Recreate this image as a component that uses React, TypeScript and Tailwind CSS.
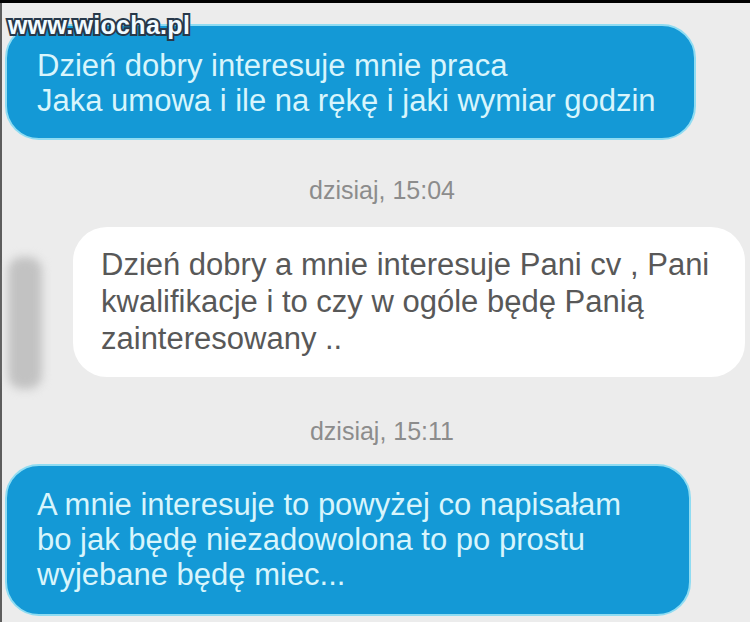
import React from "react";

const font = "font-['Liberation_Sans','Noto_Sans',Arial,sans-serif]";

function Stamp({ children }: { children: React.ReactNode }) {
  return (
    <div className={`${font} text-center text-[25px] leading-[26px] text-[#8c8c8c] pl-[12px]`}>
      {children}
    </div>
  );
}

function BlueBubble({ lines, className }: { lines: string[]; className: string }) {
  return (
    <div
      className={`${font} ml-[3px] rounded-[34px] border-2 border-[#8fdcf2] bg-[#1499d6] pl-[30px] text-[31px] leading-[35px] text-[#d8f5fc] ${className}`}
    >
      {lines.map((l) => (
        <div key={l} className="whitespace-nowrap">
          {l}
        </div>
      ))}
    </div>
  );
}

export default function App() {
  return (
    <div className="h-[622px] w-[750px] overflow-hidden bg-black pt-[3px]">
      <div className="relative flex h-full flex-col border-l-2 border-[#5d5d5d] bg-[#ececec]">
        {/* watermark */}
        <div className="absolute left-[6px] top-[7px] z-10 font-['Liberation_Sans',Arial,sans-serif] text-[25px] font-bold leading-[30px] tracking-[0.3px] text-[#f2fbff] [-webkit-text-stroke:4px_#27384a] [paint-order:stroke_fill]">
          www.wiocha.pl
        </div>

        <BlueBubble
          className="mt-[21px] w-[691px] pt-[22px] pb-[20px]"
          lines={["Dzień dobry interesuje mnie praca", "Jaka umowa i ile na rękę i jaki wymiar godzin"]}
        />

        <div className="mt-[37px]">
          <Stamp>dzisiaj, 15:04</Stamp>
        </div>

        <div className="mt-[24px] flex items-start">
          <div className="ml-[6px] mt-[30px] h-[132px] w-[34px] shrink-0 rounded-[14px] bg-[#c2c2c2] blur-[5px]" />
          <div
            className={`${font} ml-[31px] w-[672px] shrink-0 rounded-[34px] bg-white pl-[28px] pt-[19px] pb-[20px] text-[31px] leading-[37px] text-[#585858]`}
          >
            <div className="whitespace-nowrap">Dzień dobry a mnie interesuje Pani cv , Pani</div>
            <div className="whitespace-nowrap">kwalifikacje i to czy w ogóle będę Panią</div>
            <div className="whitespace-nowrap">zainteresowany ..</div>
          </div>
        </div>

        <div className="mt-[29px]">
          <Stamp>dzisiaj, 15:11</Stamp>
        </div>

        <BlueBubble
          className="mt-[20px] w-[686px] pt-[21px] pb-[22px]"
          lines={["A mnie interesuje to powyżej co napisałam", "bo jak będę niezadowolona to po prostu", "wyjebane będę miec..."]}
        />
      </div>
    </div>
  );
}
